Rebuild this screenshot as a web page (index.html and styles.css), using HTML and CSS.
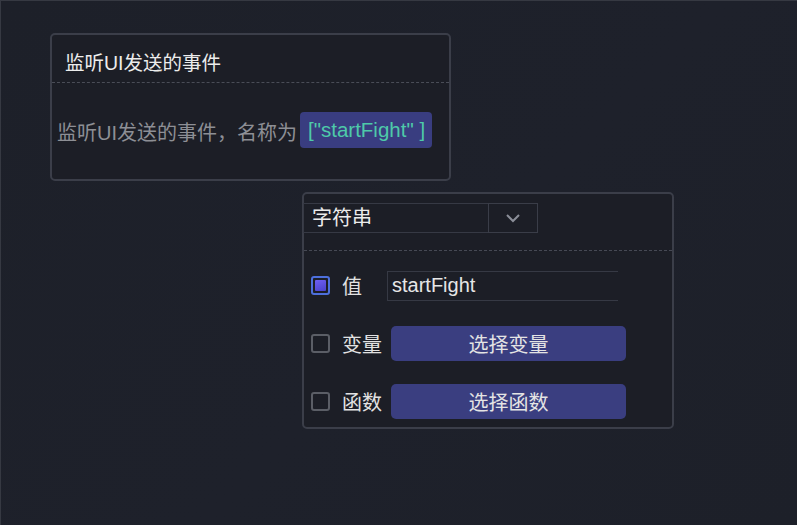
FILE: index.html
```html
<!DOCTYPE html>
<html lang="zh-CN">
<head>
  <meta charset="UTF-8">
  <title>事件节点</title>
  <link rel="stylesheet" href="styles.css">
</head>
<body>
  <div class="canvas">
    <div class="node event-node">
      <div class="node-head">监听UI发送的事件</div>
      <div class="node-body">
        <span class="desc">监听UI发送的事件，名称为</span>
        <span class="tag">["startFight" ]</span>
      </div>
    </div>

    <div class="node param-node">
      <div class="select">
        <span class="select-text">字符串</span>
        <span class="select-arrow">
          <svg width="16" height="10" viewBox="0 0 16 10"><path d="M2 2 L8 8 L14 2" fill="none" stroke="#8b8e98" stroke-width="2"/></svg>
        </span>
      </div>
      <div class="rows">
        <div class="row">
          <span class="check checked"></span>
          <span class="label">值</span>
          <input class="value-input" type="text" value="startFight">
        </div>
        <div class="row">
          <span class="check"></span>
          <span class="label">变量</span>
          <button class="pick">选择变量</button>
        </div>
        <div class="row">
          <span class="check"></span>
          <span class="label">函数</span>
          <button class="pick">选择函数</button>
        </div>
      </div>
    </div>
  </div>
</body>
</html>
```

FILE: styles.css
```css
body { margin: 0; background: #1d2029; font-family: "Liberation Sans", "Noto Sans CJK SC", sans-serif; font-size: 20px; }
.canvas { position: relative; width: 797px; height: 525px; overflow: hidden; background: linear-gradient(135deg, #1d2029 0%, #1e212b 55%, #1d2029 100%); box-shadow: inset 1px 1px 0 #363942; }

.node { position: absolute; box-sizing: border-box; border: 2px solid #3b3e49; border-radius: 5px; background: #1c1e26; }

.event-node { left: 50px; top: 33px; width: 401px; height: 148px; }
.node-head { padding: 14px 13px 5px; line-height: 28px; color: #ececec; border-bottom: 1px dashed #4a4d57; font-size: 19.5px; }
.node-body { height: 96px; display: flex; align-items: center; padding-left: 5px; }
.desc { color: #8d8f95; white-space: nowrap; }
.tag { margin-left: 3px; padding: 0 7px 0 8px; height: 36px; line-height: 36px; border-radius: 4px; background: #393d80; color: #4ecaa9; white-space: nowrap; margin-top: -2px; font-size: 20.5px; }

.param-node { left: 302px; top: 192px; width: 372px; height: 237px; padding-top: 9px; }
.select { display: flex; height: 30px; margin-left: -1px; width: 235px; }
.select-text { width: 185px; box-sizing: border-box; border: 1px solid #363944; border-right: none; padding-left: 8px; line-height: 28px; color: #ececec; }
.select-arrow { width: 50px; box-sizing: border-box; border: 1px solid #3a3d48; display: flex; align-items: center; justify-content: center; }

.rows { margin-top: 17px; border-top: 1px dashed #464954; padding: 17px 0 0 7px; display: flex; flex-direction: column; gap: 23px; }
.row { display: flex; align-items: center; height: 35px; }
.check { width: 19px; height: 19px; box-sizing: border-box; border: 2px solid #5b5e66; border-radius: 3px; display: flex; align-items: center; justify-content: center; }
.check.checked { border-color: #4d6fdc; }
.check.checked::after { content: ""; width: 11px; height: 11px; border-radius: 1px; background: linear-gradient(160deg, #6f5ff2, #4a42cc); }
.label { width: 40px; margin-left: 12px; color: #e2e2e2; }
.value-input { margin-left: 5px; width: 231px; height: 30px; box-sizing: border-box; border: 1px solid #363944; border-right: none; background: transparent; color: #e6e6e6; font: inherit; padding: 0 4px; outline: none; }
.pick { margin-left: 9px; width: 235px; height: 35px; border: none; border-radius: 5px; background: #3a3e80; color: #e4e4e4; font: inherit; padding: 0; }
```
